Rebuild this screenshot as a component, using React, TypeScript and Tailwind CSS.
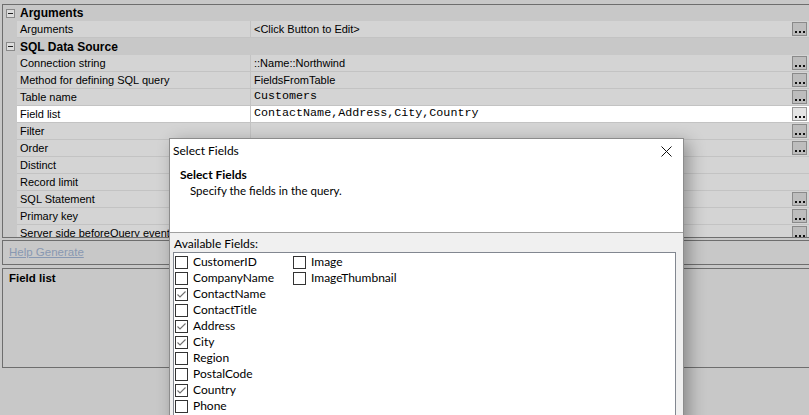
import React from 'react';

type Prop = {
  name: string;
  value?: string;
  mono?: boolean;
  button?: boolean;
  selected?: boolean;
};

const argumentProps: Prop[] = [{ name: 'Arguments', value: '<Click Button to Edit>', button: true }];

const sqlProps: Prop[] = [
  { name: 'Connection string', value: '::Name::Northwind', button: true },
  { name: 'Method for defining SQL query', value: 'FieldsFromTable', button: true },
  { name: 'Table name', value: 'Customers', mono: true, button: true },
  { name: 'Field list', value: 'ContactName,Address,City,Country', mono: true, button: true, selected: true },
  { name: 'Filter', button: true },
  { name: 'Order', button: true },
  { name: 'Distinct' },
  { name: 'Record limit' },
  { name: 'SQL Statement', button: true },
  { name: 'Primary key', button: true },
  { name: 'Server side beforeQuery event', button: true },
];

const columnA = [
  { label: 'CustomerID', checked: false },
  { label: 'CompanyName', checked: false },
  { label: 'ContactName', checked: true },
  { label: 'ContactTitle', checked: false },
  { label: 'Address', checked: true },
  { label: 'City', checked: true },
  { label: 'Region', checked: false },
  { label: 'PostalCode', checked: false },
  { label: 'Country', checked: true },
  { label: 'Phone', checked: false },
  { label: 'Fax', checked: false },
];

const columnB = [
  { label: 'Image', checked: false },
  { label: 'ImageThumbnail', checked: false },
];

const MinusBox = () => (
  <div className="w-[9px] h-[9px] border border-[#8a8a8a] bg-[#dcdcdc] flex items-center justify-center">
    <div className="w-[5px] h-px bg-[#222]" />
  </div>
);

const EllipsisButton = ({ light }: { light?: boolean }) => (
  <div
    className={
      'ml-auto mr-[2px] w-[15px] h-[14px] border flex items-end justify-center pb-[2px] ' +
      (light ? 'bg-[#e4e4e4] border-[#9a9a9a]' : 'bg-[#bdbdbd] border-[#8a8a8a]')
    }
  >
    <div className="flex gap-[2px]">
      <div className="w-[2px] h-[2px] bg-[#111]" />
      <div className="w-[2px] h-[2px] bg-[#111]" />
      <div className="w-[2px] h-[2px] bg-[#111]" />
    </div>
  </div>
);

const CategoryRow = ({ label, first }: { label: string; first?: boolean }) => (
  <div className={'flex flex-none items-center bg-[#c8c8c8] ' + (first ? 'h-[16px]' : 'h-[17px]')}>
    <div className="w-[14px] flex justify-center">
      <MinusBox />
    </div>
    <span className="pl-[3px] text-[12px] font-bold text-black leading-none">{label}</span>
  </div>
);

const PropRow = ({ p }: { p: Prop }) => (
  <div className="flex flex-none h-[17px]">
    <div className="w-[14px] bg-[#c8c8c8]" />
    <div
      className={
        'w-[234px] flex-none flex items-center pl-[3px] border-r border-b border-[#c3c3c3] ' +
        (p.selected ? 'bg-white' : 'bg-[#d4d4d4]')
      }
    >
      <span className="text-[11px] text-black whitespace-nowrap">{p.name}</span>
    </div>
    <div
      className={
        'flex-1 flex items-center pl-[3px] border-b border-[#c3c3c3] ' + (p.selected ? 'bg-white' : 'bg-[#d4d4d4]')
      }
    >
      {p.value && (
        <span
          className={
            'whitespace-nowrap text-black ' +
            (p.mono ? "font-['Liberation_Mono',monospace] text-[11.7px]" : 'text-[11px]')
          }
        >
          {p.value}
        </span>
      )}
      {p.button && <EllipsisButton light={p.selected} />}
    </div>
  </div>
);

const CheckBox = ({ checked }: { checked: boolean }) => (
  <div className="w-[13px] h-[13px] border border-[#333] bg-white flex-none flex items-center justify-center">
    {checked && (
      <svg width="11" height="11" viewBox="0 0 11 11">
        <polyline points="1.5,5.5 4,8 9.5,2.5" fill="none" stroke="#6e6e6e" strokeWidth="1.1" />
      </svg>
    )}
  </div>
);

const FieldItem = ({ label, checked }: { label: string; checked: boolean }) => (
  <div className="flex flex-none items-center h-[16px] gap-[5px]">
    <CheckBox checked={checked} />
    <span className="text-[12px] text-black whitespace-nowrap leading-none">{label}</span>
  </div>
);

export default function App() {
  return (
    <div className="relative w-[809px] h-[415px] overflow-hidden bg-[#c8c8c8] font-['Liberation_Sans',Arial,sans-serif]">
      {/* property grid */}
      <div className="ml-[2px] mt-[4px] h-[234px] overflow-hidden border-l border-t border-b border-[#6e6e6e]">
        <CategoryRow label="Arguments" first />
        {argumentProps.map((p) => (
          <PropRow key={p.name} p={p} />
        ))}
        <CategoryRow label="SQL Data Source" />
        {sqlProps.map((p) => (
          <PropRow key={p.name} p={p} />
        ))}
      </div>

      {/* commands panel */}
      <div className="ml-[2px] mt-[2px] h-[25px] border-l border-t border-b border-[#6e6e6e] flex items-center pl-[6px]">
        <span className="text-[11.5px] text-[#8898b2] underline">Help Generate</span>
      </div>

      {/* description panel */}
      <div className="ml-[2px] mt-[3px] h-[100px] border-l border-t border-b border-[#6e6e6e] pl-[6px] pt-[2px]">
        <div className="text-[11.5px] leading-[14px] font-bold text-black">Field list</div>
      </div>

      {/* dialog */}
      <div className="absolute left-[169px] top-[138px] w-[515px] h-[340px] bg-white border border-[#8c8c8c] shadow-[5px_4px_16px_rgba(0,0,0,0.32)] flex flex-col font-['Lato',sans-serif]">
        <div className="h-[24px] flex-none flex items-center pl-[3px] relative">
          <span className="text-[12px] text-black">Select Fields</span>
          <svg className="absolute right-[11px] top-[7px]" width="11" height="11" viewBox="0 0 11 11">
            <path d="M0.5 0.5 L10.5 10.5 M10.5 0.5 L0.5 10.5" stroke="#111" strokeWidth="1" />
          </svg>
        </div>
        <div className="h-[70px] flex-none pt-[4px] border-b border-[#a0a0a0]">
          <div className="pl-[10px] h-[16px] flex items-center text-[12px] font-bold text-black">Select Fields</div>
          <div className="pl-[20px] h-[16px] flex items-center text-[11.5px] text-black">
            Specify the fields in the query.
          </div>
        </div>
        <div className="flex-1 bg-[#f0f0f0] pt-[3px]">
          <div className="pl-[4px] h-[16px] flex items-center text-[12px] text-black">Available Fields:</div>
          <div className="ml-[3px] w-[503px] h-[220px] bg-white border border-[#828790] flex pl-[1px] pt-[1px]">
            <div className="w-[118px] flex flex-col">
              {columnA.map((f) => (
                <FieldItem key={f.label} label={f.label} checked={f.checked} />
              ))}
            </div>
            <div className="flex flex-col">
              {columnB.map((f) => (
                <FieldItem key={f.label} label={f.label} checked={f.checked} />
              ))}
            </div>
          </div>
        </div>
      </div>
    </div>
  );
}
